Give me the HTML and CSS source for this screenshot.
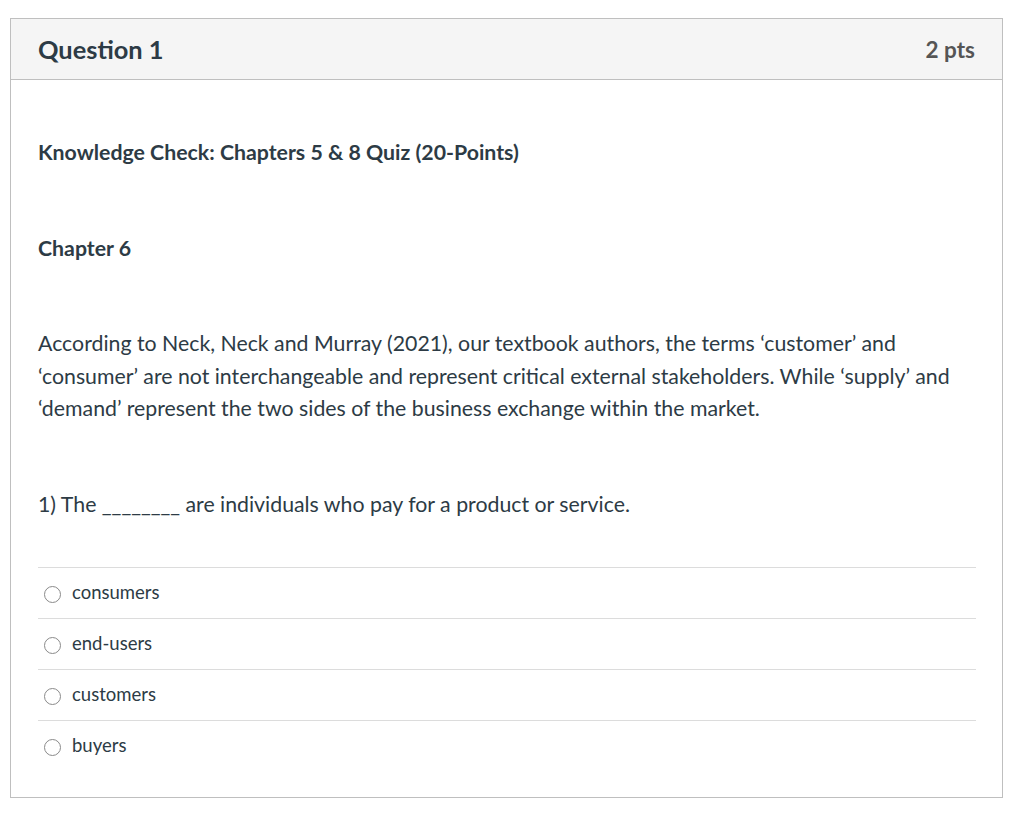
FILE: index.html
```html
<!DOCTYPE html>
<html>
<head>
<meta charset="utf-8">
<link rel="stylesheet" href="styles.css">
</head>
<body>
<div class="card">
  <div class="card-header">
    <h2 class="q-title">Question 1</h2>
    <span class="q-points">2 pts</span>
  </div>
  <div class="card-body">
    <p class="para strong">Knowledge Check: Chapters 5 &amp; 8 Quiz (20-Points)</p>
    <p class="para strong">Chapter 6</p>
    <p class="para">According to Neck, Neck and Murray (2021), our textbook authors, the terms ‘customer’ and ‘consumer’ are not interchangeable and represent critical external stakeholders. While ‘supply’ and ‘demand’ represent the two sides of the business exchange within the market.</p>
    <p class="para last">1) The ________ are individuals who pay for a product or service.</p>
    <div class="answers">
      <label class="answer"><span class="radio"></span><span class="answer-text">consumers</span></label>
      <label class="answer"><span class="radio"></span><span class="answer-text">end-users</span></label>
      <label class="answer"><span class="radio"></span><span class="answer-text">customers</span></label>
      <label class="answer"><span class="radio"></span><span class="answer-text">buyers</span></label>
    </div>
  </div>
</div>
</body>
</html>
```
FILE: styles.css
```css
html, body {
  margin: 0;
  padding: 0;
  background: #fff;
}
body {
  padding: 18px 0 0 10px;
  font-family: Lato, "Liberation Sans", sans-serif;
  color: #2d3b45;
}
.card {
  width: 991px;
  border: 1px solid #bfbfbf;
  background: #fff;
}
.card-header {
  height: 60px;
  background: #f5f5f5;
  border-bottom: 1px solid #bfbfbf;
  display: flex;
  align-items: center;
  justify-content: space-between;
  padding: 0 27px 0 27px;
}
.q-title {
  margin: 0;
  font-size: 25.4px;
  font-weight: 700;
  color: #2d3b45;
}
.q-points {
  font-size: 22.5px;
  font-weight: 700;
  color: #555;
}
.card-body {
  padding: 56px 26px 26px 27px;
}
.para {
  margin: 0 0 63px 0;
  font-size: 21.3px;
  line-height: 32.5px;
}
.para.strong {
  font-weight: 700;
}
.para.last {
  margin-bottom: 47px;
}
.answers {
  display: flex;
  flex-direction: column;
}
.answer {
  display: flex;
  align-items: center;
  height: 50px;
  border-top: 1px solid #dcdcdc;
  padding-left: 6px;
}
.radio {
  width: 17px;
  height: 17px;
  border: 1.5px solid #8a8a8a;
  border-radius: 50%;
  box-sizing: border-box;
  margin-right: 11px;
  margin-top: 2px;
}
.answer-text {
  font-size: 18.5px;
  padding-bottom: 2px;
}
```
